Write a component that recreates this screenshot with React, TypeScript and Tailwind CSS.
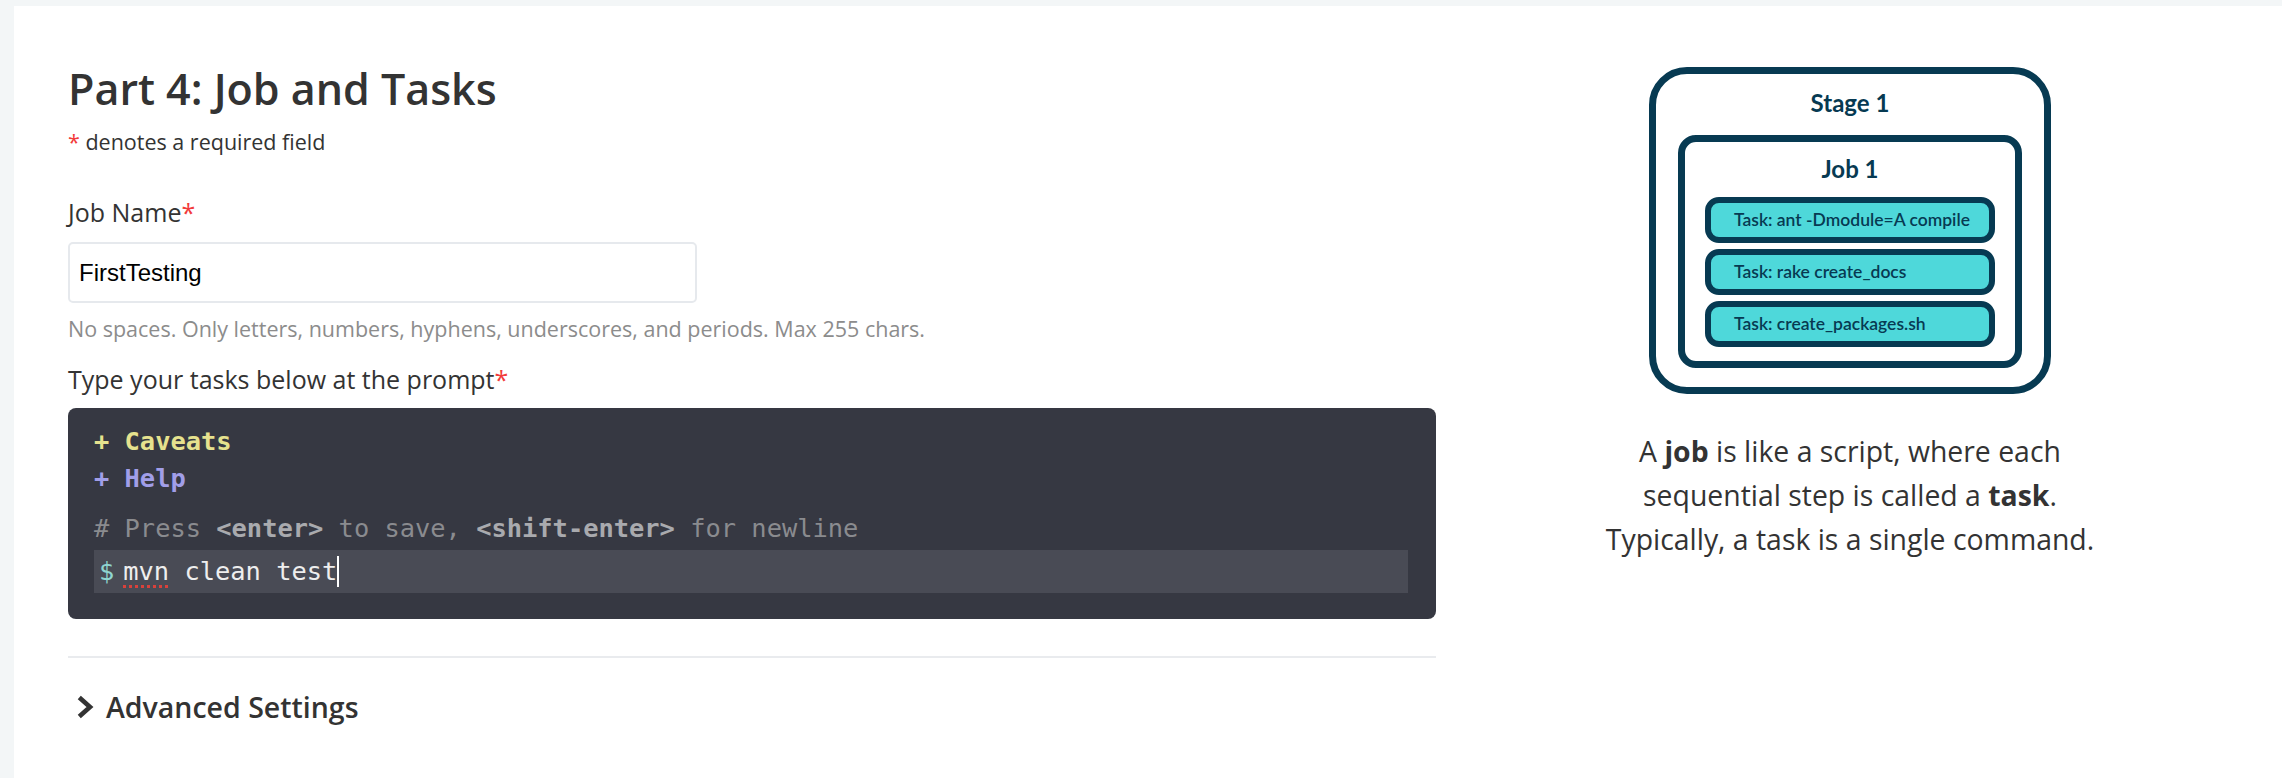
import React from "react";

const sans = { fontFamily: '"Open Sans", "Noto Sans", sans-serif' };

function Req() {
  return <span className="text-[#f23a3a]">*</span>;
}

function Chevron() {
  return (
    <svg width="20" height="24" viewBox="0 0 20 24" className="mr-[10px]">
      <path d="M5 4 L14 12 L5 20" fill="none" stroke="#333" strokeWidth="4.6" strokeLinejoin="miter" strokeLinecap="square" />
    </svg>
  );
}

function Terminal() {
  return (
    <div
      className="mt-[12px] h-[211px] w-full rounded-[8px] bg-[#363842] pt-[15px] pl-[26px] pr-[28px] text-[25.4px] whitespace-pre"
      style={{ fontFamily: '"DejaVu Sans Mono", "Liberation Mono", monospace' }}
    >
      <div className="h-[37px] leading-[37px] font-bold text-[#e6e28e]">+ Caveats</div>
      <div className="h-[37px] leading-[37px] font-bold text-[#a19ee8]">+ Help</div>
      <div className="mt-[10px] h-[43px] leading-[43px] text-[#8a8b8f]">
        # Press <span className="font-bold text-[#a9aaae]">&lt;enter&gt;</span> to save,{" "}
        <span className="font-bold text-[#a9aaae]">&lt;shift-enter&gt;</span> for newline
      </div>
      <div className="flex h-[43px] items-center bg-[#494b55] pl-[5px] leading-[43px]">
        <span className="mr-[9px] text-[#8fd4d0]">$</span>
        <span className="text-[#eeeeee] underline decoration-dotted decoration-[#d9413b] decoration-[3px] underline-offset-[5px]">mvn</span>
        <span className="text-[#eeeeee]"> clean test</span>
        <span className="inline-block h-[31px] w-[2px] bg-white" />
      </div>
    </div>
  );
}

function TaskBox({ label }: { label: string }) {
  return (
    <div className="flex h-[46px] w-[290px] items-center rounded-[14px] border-[6px] border-[#073a52] bg-[#4ed8da] pl-[23px] text-[17.5px] font-semibold text-[#073a52]">
      {label}
    </div>
  );
}

function Diagram() {
  const geo = { fontFamily: 'Lato, "Noto Sans", sans-serif' };
  return (
    <div
      className="flex h-[327px] w-[402px] flex-col items-center rounded-[38px] border-[7px] border-[#073a52] bg-white pt-[13px]"
      style={geo}
    >
      <div className="text-[24px] leading-[32px] font-bold text-[#073a52]">Stage 1</div>
      <div className="mt-[16px] flex w-[344px] flex-col items-center rounded-[18px] border-[7px] border-[#073a52] pt-[11px] pb-[14px]">
        <div className="text-[24px] leading-[32px] font-bold text-[#073a52]">Job 1</div>
        <div className="mt-[12px] flex flex-col gap-[6px]">
          <TaskBox label="Task: ant -Dmodule=A compile" />
          <TaskBox label="Task: rake create_docs" />
          <TaskBox label="Task: create_packages.sh" />
        </div>
      </div>
    </div>
  );
}

export default function App() {
  return (
    <div className="h-[778px] w-full overflow-hidden bg-[#f3f6f7] pt-[6px] pl-[14px]" style={sans}>
      <div className="flex h-[772px] bg-white pl-[54px]">
        <div className="w-[1368px] pt-[53px] text-[#333333]">
          <h1 className="text-[43px] leading-[59px] font-semibold">Part 4: Job and Tasks</h1>
          <p className="mt-[9px] text-[21.5px] leading-[30px]">
            <Req /> denotes a required field
          </p>
          <label className="mt-[38px] block text-[25px] leading-[34px]">
            Job Name<Req />
          </label>
          <div
            className="mt-[13px] flex h-[61px] w-[629px] items-center rounded-[5px] border-2 border-[#e6e9ed] pl-[9px] text-[24px] text-black"
            style={{ fontFamily: '"Liberation Sans", Arial, sans-serif' }}
          >
            FirstTesting
          </div>
          <p className="mt-[11px] text-[21.5px] leading-[30px] text-[#8c8c8c]">
            No spaces. Only letters, numbers, hyphens, underscores, and periods. Max 255 chars.
          </p>
          <label className="mt-[18px] block text-[25px] leading-[34px]">
            Type your tasks below at the prompt<Req />
          </label>
          <Terminal />
          <div className="mt-[37px] h-[2px] w-full bg-[#e9ebee]" />
          <div className="mt-[29px] flex items-center pl-[8px] text-[28.5px] leading-[40px] font-semibold">
            <Chevron />
            Advanced Settings
          </div>
        </div>
        <div className="ml-[124px] flex w-[580px] flex-col items-center pt-[61px]">
          <Diagram />
          <p className="mt-[35px] text-center text-[28.4px] leading-[44px] text-[#333333]">
            A <b className="font-bold">job</b> is like a script, where each
            <br />
            sequential step is called a <b className="font-bold">task</b>.
            <br />
            Typically, a task is a single command.
          </p>
        </div>
      </div>
    </div>
  );
}
